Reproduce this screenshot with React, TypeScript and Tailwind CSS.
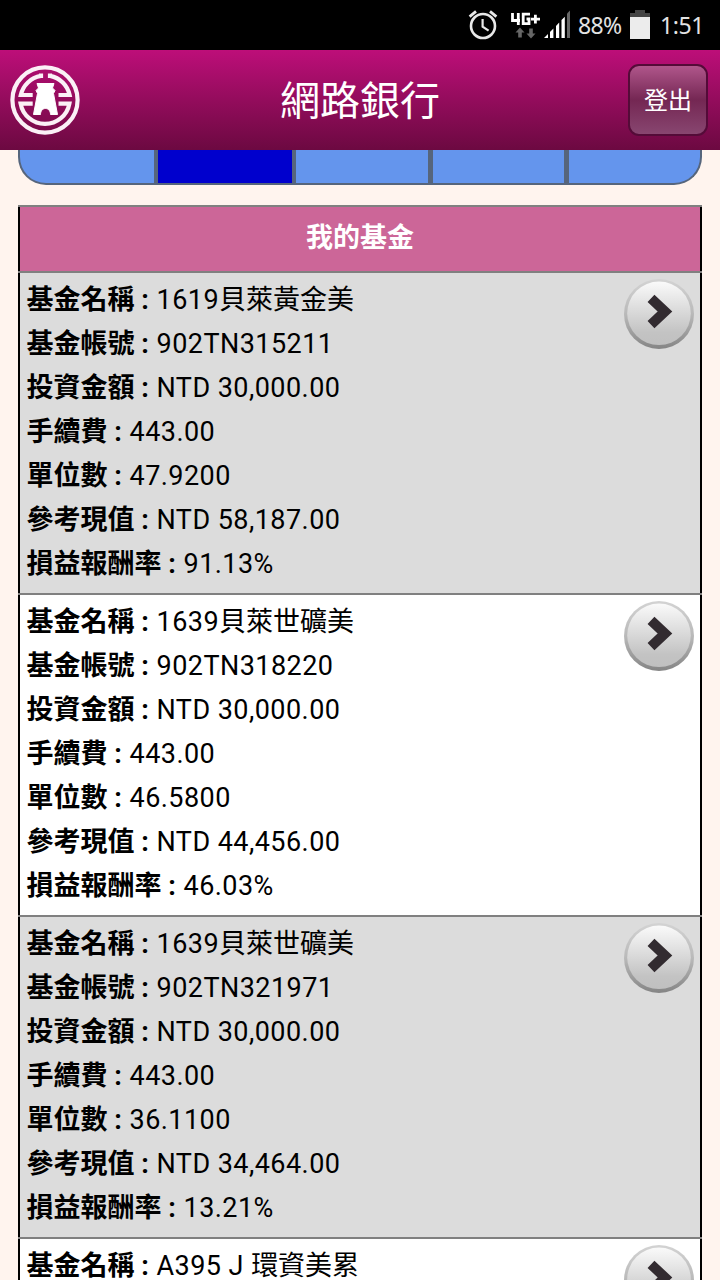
import React from 'react'
import clsx from 'clsx'

const labels = ['基金名稱', '基金帳號', '投資金額', '手續費', '單位數', '參考現值', '損益報酬率']

const funds = [
    ['1619貝萊黃金美', '902TN315211', 'NTD 30,000.00', '443.00', '47.9200', 'NTD 58,187.00', '91.13%'],
    ['1639貝萊世礦美', '902TN318220', 'NTD 30,000.00', '443.00', '46.5800', 'NTD 44,456.00', '46.03%'],
    ['1639貝萊世礦美', '902TN321971', 'NTD 30,000.00', '443.00', '36.1100', 'NTD 34,464.00', '13.21%'],
    ['A395 J 環資美累'],
]

const StatusBar = () => {
    return (
        <div className="h-[50px] shrink-0 bg-black flex items-center pl-[468px] text-[#e3e3e3] font-['Noto_Sans','Open_Sans',sans-serif] text-[23px]">
            <svg width="30" height="34" viewBox="0 0 30 34" fill="none" stroke="#e8e8e8" className="shrink-0">
                <circle cx="15" cy="18" r="12" strokeWidth="2.6" />
                <path d="M14.6 11V18.6L20.6 22.6" strokeWidth="2.2" />
                <path d="M1.6 8.6L8 3.4M28.4 8.6L22 3.4" strokeWidth="2.8" />
            </svg>
            <svg width="30" height="30" viewBox="0 0 30 30" fill="none" className="shrink-0 ml-[12px]">
                <path d="M2.5 3V10.5H10M8.3 3V15M20 4.2H13.2V13.6H19V9H16.5M21 9.2H30M25.4 4.8V13.6" stroke="#fff" strokeWidth="2.8" />
                <path d="M10 17.5L14.5 22.5H11.8V27.5H8.2V22.5H5.5ZM21 28.5L16.5 23.5H19.2V18.5H22.8V23.5H25.5Z" fill="#666" />
            </svg>
            <svg width="26" height="28" viewBox="0 0 26 28" className="shrink-0 ml-[4px] -translate-y-px">
                <path d="M0 28L4 24V28ZM6 28V22L9.4 18.5V28ZM12 28V16L15.2 12.6V28ZM17.5 28V10L20.8 6.7V28Z" fill="#fff" />
                <path d="M23 28V3.5L26 0.5V28Z" fill="#666" />
            </svg>
            <span className="ml-[8px] w-[45px] whitespace-nowrap tracking-[-0.6px]">88%</span>
            <svg width="20" height="30" viewBox="0 0 20 30" className="shrink-0 ml-[7px]">
                <path d="M5 0H15V3H20V7H0V3H5Z" fill="#444" />
                <path d="M0 7H20V29H0Z" fill="#ececec" />
            </svg>
            <span className="ml-[10px] whitespace-nowrap tracking-[-0.4px]">1:51</span>
        </div>
    )
}

const BankLogo = () => {
    return (
        <svg width="70" height="70" viewBox="0 0 70 70" fill="none" stroke="#fbf0f6" strokeWidth="4.2">
            <circle cx="35" cy="35" r="32.6" />
            <path d="M31 8.5V13M30.8 10.9A24.8 24.8 0 0 0 10.8 30H22.7" />
            <path d="M40 8.5V13M40.2 10.9A24.8 24.8 0 0 1 59.6 30H48.5" />
            <path d="M22.7 38.6H10.6A24.8 24.8 0 0 0 59.4 38.6H48.5" />
            <path d="M27 18.5H44L42.5 23L45 25.5L43.5 28.5L47.5 49.5H40.5C40.5 46 38.5 43.5 35.5 43.5C32.5 43.5 30.5 46 30.5 49.5H23.5L27.5 28.5L26 25.5L28.5 23Z" fill="#fff" stroke="#fff" strokeWidth="1" />
        </svg>
    )
}

const Header = () => {
    return (
        <div className="h-[100px] shrink-0 pl-[10px] pr-[12px] flex items-center justify-between bg-linear-to-b from-[#bd0e79] to-[#6c0941] text-white">
            <div className="w-[82px]"><BankLogo /></div>
            <div className="pt-[4px] text-[40px] leading-[60px]">網路銀行</div>
            <button className="w-[80px] h-[72px] pt-[2px] rounded-[11px] border-2 border-[#540b38] bg-[linear-gradient(#b0568b_0%,#742753_50%,#884670_100%)] text-[24px] leading-none">登出</button>
        </div>
    )
}

const Tabs = () => {
    return (
        <div className="h-[35px] flex overflow-hidden rounded-b-[28px] border-x-2 border-b-2 border-[#56657c] bg-[#56657c]">
            <div className="w-[134px] bg-[#6495ed] mr-[4px]"></div>
            <div className="w-[134px] bg-[#0000cd] mr-[4px]"></div>
            <div className="w-[132px] bg-[#6495ed] mr-[5px]"></div>
            <div className="w-[131px] bg-[#6495ed] mr-[5px]"></div>
            <div className="grow bg-[#6495ed]"></div>
        </div>
    )
}

const ArrowButton = ({ id }: { id: number }) => {
    return (
        <button className="self-start shrink-0">
            <svg width="70" height="70" viewBox="0 0 70 70">
                <defs>
                    <linearGradient id={`ring${id}`} x1="0" y1="0" x2="0" y2="1">
                        <stop offset="0" stopColor="#d3d3d3" />
                        <stop offset="0.5" stopColor="#b9b9b9" />
                        <stop offset="1" stopColor="#858585" />
                    </linearGradient>
                    <linearGradient id={`face${id}`} x1="0" y1="0" x2="0" y2="1">
                        <stop offset="0" stopColor="#fafafa" />
                        <stop offset="0.8" stopColor="#c3c3c3" />
                        <stop offset="1" stopColor="#c0c0c0" />
                    </linearGradient>
                </defs>
                <circle cx="35" cy="35" r="35" fill={`url(#ring${id})`} />
                <circle cx="35" cy="34.3" r="31.8" fill={`url(#face${id})`} />
                <path d="M27 19.3L41 32.5L27 45.7" fill="none" stroke="#322b30" strokeWidth="10" />
            </svg>
        </button>
    )
}

// latin part is spaced a bit wider than the chinese part
const Value = ({ text }: { text: string }) => {
    const latin = text.match(/^[\x20-\x7e]*/)![0]
    return (
        <span className="ml-px">
            <span className="tracking-[0.45px]">{latin}</span>{text.slice(latin.length)}
        </span>
    )
}

export default function App() {
    return (
        <div className="h-[1280px] w-[720px] overflow-hidden flex flex-col bg-[#fff4ee] text-black font-['Roboto','Noto_Sans_CJK_TC',sans-serif]">
            <StatusBar />
            <Header />
            <div className="px-[18px]">
                <Tabs />
                <div className="mt-[20px]">
                    <div className="border-t-2 border-[#808080]">
                        <div className="h-[64px] pb-[1px] flex items-center justify-center border-x-2 border-black bg-[#cc6698] text-white text-[27px] font-bold">我的基金</div>
                    </div>
                    {funds.map((fund, i) => (
                        <div key={i} className="border-t-2 border-[#808080]">
                            <div className={clsx('h-[320px] pt-[4px] pl-[6.5px] pr-[6px] flex justify-between border-x-2 border-black', i % 2 === 0 ? 'bg-[#dcdcdc]' : 'bg-white')}>
                                <div className="pt-px text-[27px]">
                                    {fund.map((value, j) => (
                                        <div key={j} className="h-[44px] leading-[44px] whitespace-nowrap">
                                            <b>{labels[j]} : </b><Value text={value} />
                                        </div>
                                    ))}
                                </div>
                                <div className="pt-[2px]"><ArrowButton id={i} /></div>
                            </div>
                        </div>
                    ))}
                </div>
            </div>
        </div>
    )
}
